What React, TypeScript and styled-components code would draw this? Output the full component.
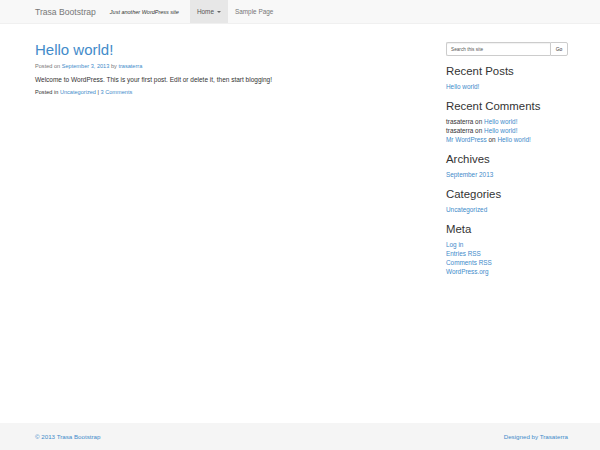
import React from "react";
import styled, { createGlobalStyle } from "styled-components";

const Global = createGlobalStyle`
  html, body { margin: 0; padding: 0; background: #fff; }
  body { font-family: "Liberation Sans", Arial, sans-serif; color: #333; }
  a { color: #428bca; text-decoration: none; }
`;

const Page = styled.div`
  min-height: 450px;
  display: flex;
  flex-direction: column;
`;

const Navbar = styled.nav`
  height: 23px;
  background: #f8f8f8;
  border-bottom: 1px solid #f0f0f0;
  padding-left: 35px;
  display: flex;
  align-items: stretch;
`;

const Brand = styled.a`
  color: #777;
  font-size: 8.6px;
  display: flex;
  align-items: center;
  padding-right: 14px;
  &:hover { color: #777; }
`;

const Tagline = styled.span`
  font-style: italic;
  font-size: 5.5px;
  color: #333;
  display: flex;
  align-items: center;
  margin-right: 11px;
`;

const NavLink = styled.a<{ $active?: boolean }>`
  display: flex;
  align-items: center;
  padding: 0 7px;
  font-size: 6.4px;
  color: ${(p) => (p.$active ? "#555" : "#777")};
  background: ${(p) => (p.$active ? "#e7e7e7" : "transparent")};
`;

const Caret = styled.span`
  display: inline-block;
  width: 0;
  height: 0;
  margin-left: 3px;
  border-top: 2px solid #666;
  border-left: 2px solid transparent;
  border-right: 2px solid transparent;
`;

const Container = styled.div`
  flex: 1;
  display: flex;
  padding: 18px 32px 0 35px;
`;

const Main = styled.main`
  flex: 1;
`;

const Title = styled.h1`
  margin: 0;
  font-size: 15px;
  line-height: 16.5px;
  font-weight: 400;
  color: #428bca;
`;

const Meta = styled.div<{ $top: number }>`
  font-size: 5.6px;
  line-height: 8px;
  color: #777;
  margin-top: ${(p) => p.$top}px;
`;

const Body = styled.p`
  margin: 5.5px 0 0;
  font-size: 6.5px;
  line-height: 9.3px;
  color: #333;
`;

const Sidebar = styled.aside`
  width: 122px;
  flex-shrink: 0;
`;

const Search = styled.form`
  display: flex;
  height: 14px;
  margin: 0;
`;

const SearchInput = styled.div`
  flex: 1;
  box-sizing: border-box;
  border: 1px solid #ccc;
  border-right: none;
  border-radius: 2px 0 0 2px;
  box-shadow: inset 0 1px 1px rgba(0, 0, 0, 0.06);
  font-size: 4.7px;
  color: #555;
  display: flex;
  align-items: center;
  padding-left: 4px;
`;

const GoButton = styled.div`
  width: 18px;
  box-sizing: border-box;
  border: 1px solid #ccc;
  border-radius: 0 2px 2px 0;
  background: #fff;
  font-size: 5px;
  color: #333;
  display: flex;
  align-items: center;
  justify-content: center;
`;

const WidgetTitle = styled.h3`
  margin: 9px 0 4.6px;
  font-size: 11.4px;
  line-height: 12.4px;
  font-weight: 400;
  color: #333;
`;

const List = styled.ul`
  list-style: none;
  margin: 0;
  padding: 0;
`;

const Item = styled.li`
  font-size: 6.4px;
  line-height: 9px;
  color: #333;
`;

const Footer = styled.footer`
  height: 27px;
  background: #f5f5f5;
  display: flex;
  align-items: center;
  justify-content: space-between;
  padding: 0 32px 0 35px;
  font-size: 6.2px;
`;

export default function App() {
  return (
    <>
      <Global />
      <Page>
        <Navbar>
          <Brand href="#">Trasa Bootstrap</Brand>
          <Tagline>Just another WordPress site</Tagline>
          <NavLink $active href="#">
            Home<Caret />
          </NavLink>
          <NavLink href="#">Sample Page</NavLink>
        </Navbar>
        <Container>
          <Main>
            <Title>Hello world!</Title>
            <Meta $top={3.3}>
              Posted on <a href="#">September 3, 2013</a> by <a href="#">trasaterra</a>
            </Meta>
            <Body>Welcome to WordPress. This is your first post. Edit or delete it, then start blogging!</Body>
            <Meta $top={3.6} style={{ color: "#333" }}>
              Posted in <a href="#">Uncategorized</a> | <a href="#">3 Comments</a>
            </Meta>
          </Main>
          <Sidebar>
            <Search>
              <SearchInput>Search this site</SearchInput>
              <GoButton>Go</GoButton>
            </Search>
            <WidgetTitle>Recent Posts</WidgetTitle>
            <List>
              <Item><a href="#">Hello world!</a></Item>
            </List>
            <WidgetTitle>Recent Comments</WidgetTitle>
            <List>
              <Item>trasaterra on <a href="#">Hello world!</a></Item>
              <Item>trasaterra on <a href="#">Hello world!</a></Item>
              <Item><a href="#">Mr WordPress</a> on <a href="#">Hello world!</a></Item>
            </List>
            <WidgetTitle>Archives</WidgetTitle>
            <List>
              <Item><a href="#">September 2013</a></Item>
            </List>
            <WidgetTitle>Categories</WidgetTitle>
            <List>
              <Item><a href="#">Uncategorized</a></Item>
            </List>
            <WidgetTitle>Meta</WidgetTitle>
            <List>
              <Item><a href="#">Log in</a></Item>
              <Item><a href="#">Entries RSS</a></Item>
              <Item><a href="#">Comments RSS</a></Item>
              <Item><a href="#">WordPress.org</a></Item>
            </List>
          </Sidebar>
        </Container>
        <Footer>
          <a href="#">© 2013 Trasa Bootstrap</a>
          <a href="#">Designed by Trasaterra</a>
        </Footer>
      </Page>
    </>
  );
}
